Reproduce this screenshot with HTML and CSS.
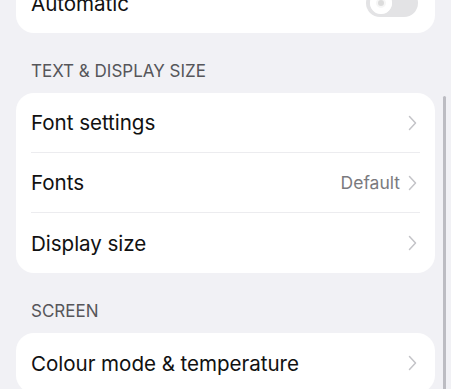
FILE: index.html
```html
<!DOCTYPE html>
<html>
<head>
<meta charset="utf-8">
<link rel="stylesheet" href="styles.css">
</head>
<body>
<div class="page">
  <div class="card">
    <div class="row">
      <span class="label">Automatic</span>
      <span class="toggle"><span class="knob"></span></span>
    </div>
  </div>
  <div class="section">TEXT &amp; DISPLAY SIZE</div>
  <div class="card">
    <div class="row">
      <span class="label">Font settings</span>
      <span class="chev"><svg width="9" height="16" viewBox="0 0 9 16"><path d="M1.5 1.5 L7.5 8 L1.5 14.5" fill="none" stroke="#c4c4c8" stroke-width="1.5" stroke-linecap="round" stroke-linejoin="round"/></svg></span>
    </div>
    <div class="row">
      <span class="label">Fonts</span>
      <span class="value">Default</span>
      <span class="chev"><svg width="9" height="16" viewBox="0 0 9 16"><path d="M1.5 1.5 L7.5 8 L1.5 14.5" fill="none" stroke="#c4c4c8" stroke-width="1.5" stroke-linecap="round" stroke-linejoin="round"/></svg></span>
    </div>
    <div class="row">
      <span class="label">Display size</span>
      <span class="chev"><svg width="9" height="16" viewBox="0 0 9 16"><path d="M1.5 1.5 L7.5 8 L1.5 14.5" fill="none" stroke="#c4c4c8" stroke-width="1.5" stroke-linecap="round" stroke-linejoin="round"/></svg></span>
    </div>
  </div>
  <div class="section">SCREEN</div>
  <div class="card">
    <div class="row">
      <span class="label">Colour mode &amp; temperature</span>
      <span class="chev"><svg width="9" height="16" viewBox="0 0 9 16"><path d="M1.5 1.5 L7.5 8 L1.5 14.5" fill="none" stroke="#c4c4c8" stroke-width="1.5" stroke-linecap="round" stroke-linejoin="round"/></svg></span>
    </div>
  </div>
</div>
<div class="scrollbar"></div>
</body>
</html>
```
FILE: styles.css
```css
html, body {
  margin: 0;
  padding: 0;
  background: #f1f1f5;
  overflow: hidden;
  height: 389px;
}
body {
  font-family: Inter, "Open Sans", "Noto Sans", sans-serif;
  color: #111;
}
.page {
  margin-top: -27px;
  padding: 0 16px;
}
.card {
  background: #fff;
  border-radius: 18px;
  padding: 0 15px;
}
.row {
  height: 60px;
  display: flex;
  align-items: center;
  border-bottom: 1px solid #ececef;
  box-sizing: border-box;
}
.row:last-child {
  border-bottom: none;
}
.label {
  flex: 1;
  font-size: 20.6px;
  letter-spacing: -0.05px;
}
.value {
  font-size: 17.5px;
  color: #7a7a7e;
  margin-right: 8px;
}
.chev {
  display: flex;
  align-items: center;
  width: 9px;
  margin-right: 3px;
}
.toggle {
  width: 52px;
  height: 28px;
  border-radius: 14px;
  background: #e3e3e5;
  position: relative;
  margin-right: 2px;
  display: flex;
  align-items: center;
}
.knob {
  position: absolute;
  left: 4px;
  top: 3px;
  width: 22px;
  height: 22px;
  border-radius: 50%;
  background: #f6f6f6;
  box-shadow: inset 0 0 0 6px #fff;
}
.knob::after {
  content: "";
  position: absolute;
  left: 8px;
  top: 8px;
  width: 6px;
  height: 6px;
  border-radius: 50%;
  background: #dcdcdc;
}
.section {
  font-size: 17px;
  color: #56565a;
  padding: 28px 15px 12px;
  line-height: 20px;
}
.scrollbar {
  position: absolute;
  left: 443px;
  top: 96px;
  width: 3px;
  height: 300px;
  background: #bcbcc2;
  border-radius: 1.5px;
}
```
